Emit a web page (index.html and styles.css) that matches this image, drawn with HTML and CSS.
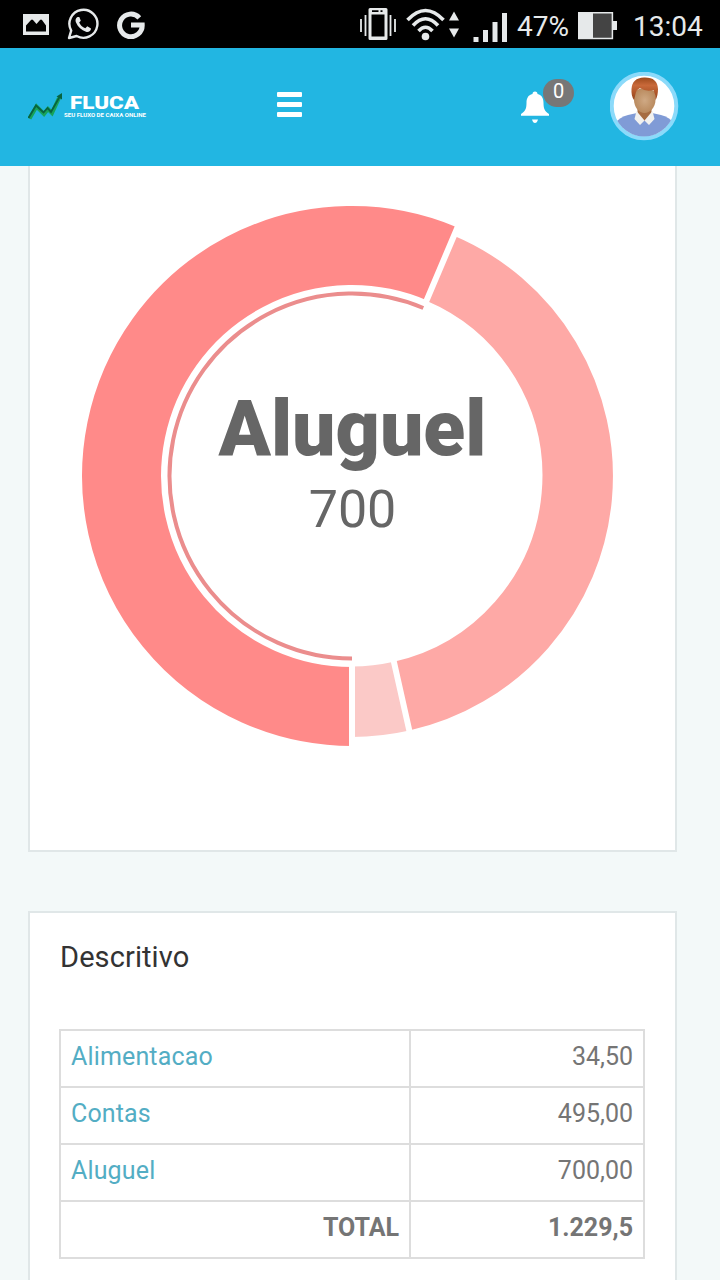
FILE: index.html
```
<!DOCTYPE html>
<html lang="pt-br">

<head>
    <meta charset="utf-8" />
    <meta name="viewport" content="width=device-width, initial-scale=1.0" />
    <title>Fluca - Seu fluxo de caixa online</title>
    <link rel="stylesheet" href="styles.css">
</head>

<body>
    <div class="status-bar">
        <div class="status-left">
            <svg width="26" height="21" viewBox="0 0 26 21">
                <path fill="#e6e9ea" fill-rule="evenodd" d="M0 0H26V21H0ZM3 17.500V11.500L8 6Q9 5 10 6L13.500 10L17 6Q18 5 19 6L23 11.500V17.500Z" />
            </svg>
            <svg class="whatsapp" width="32" height="32" viewBox="0 0 32 32">
                <path fill="none" stroke="#e6e9ea" stroke-width="2.400" stroke-linejoin="round" d="M2 30L4.200 22.600A14 14 0 1 1 9.600 28Z" />
                <path fill="#e6e9ea" d="M10.500 9C8.500 10 8 12.500 9 14.500C11 19 14.500 22.300 19 23.800C21.500 24.500 24 23 24 20.500L20.300 18.300L18.300 20.300C15.500 19.200 13.200 17 12.200 14.500L13.800 12.800L12.300 9Z" />
            </svg>
            <svg class="google" width="28" height="28" viewBox="0 0 28 28">
                <path fill="none" stroke="#e6e9ea" stroke-width="5" d="M22.300 6.800A11.300 11.300 0 1 0 25.200 13.900H14" />
            </svg>
        </div>
        <div class="status-right">
            <svg width="38" height="34" viewBox="0 0 38 34">
                <path fill="none" stroke="#e6e9ea" stroke-width="1.800" d="M2 12V25M6.500 8V29M31.500 8V29M36 12V25" />
                <path fill="#e6e9ea" fill-rule="evenodd" d="M11 1H27Q28.500 1 28.500 2.500V31.500Q28.500 33 27 33H11Q9.500 33 9.500 31.500V2.500Q9.500 1 11 1ZM12.500 7.500V29.500H25.500V7.500ZM13 3.200V5H19.500V3.200ZM21.500 3.200V5H23.500V3.200Z" />
            </svg>
            <svg class="wifi" width="54" height="34" viewBox="0 0 54 34">
                <path fill="none" stroke="#e6e9ea" stroke-width="3.600" d="M1.500 13Q19.500 -6 37.500 13M7 18.500Q19.500 5 32 18.500M12.500 24Q19.500 16.500 26.500 24" />
                <circle cx="19.500" cy="29.500" r="3.800" fill="#e6e9ea" />
                <path fill="#e6e9ea" d="M43 13.500L48 4.500L53 13.500ZM43 21.500H53L48 30.500Z" />
            </svg>
            <svg class="signal" width="34" height="29" viewBox="0 0 34 29">
                <path fill="none" stroke="#e6e9ea" stroke-width="5" d="M3 29V24M12.500 29V17M22 29V9M31.500 29V0" />
            </svg>
            <span class="percent">47%</span>
            <svg class="battery" width="39" height="28" viewBox="0 0 39 28">
                <path fill="#444" d="M1 1H34V26H1Z" />
                <path fill="#e6e9ea" d="M0 0H15V27H0ZM35 9H39V18H35Z" />
                <path fill="none" stroke="#e6e9ea" stroke-width="1.500" d="M.8.800H34.400V26.400H.8Z" />
            </svg>
            <span class="clock">13:04</span>
        </div>
    </div>

    <header class="navbar">
        <a class="logo" href="#">
            <svg width="35" height="27" viewBox="0 0 35 27">
                <path fill="none" stroke="#17a35a" stroke-width="4" d="M1.500 25.500L8.500 13.500L16 21L20 16L24 20L31 5" />
                <path fill="none" stroke="#08633f" stroke-width="1.800" d="M.5 25L8 12.500L15.500 19.500L19.500 15L23 19L31.500 4" />
                <path fill="#08633f" d="M28.500 3.500L34 0L34 6.500Z" />
            </svg>
            <svg width="84" height="28" viewBox="0 0 84 28">
                <text class="logo-name" x="7" y="15.500" textLength="69" lengthAdjust="spacingAndGlyphs">FLUCA</text>
                <text class="logo-slogan" x="1" y="23.500" textLength="82" lengthAdjust="spacingAndGlyphs">SEU FLUXO DE CAIXA ONLINE</text>
            </svg>
        </a>
        <button class="menu-toggle">
            <span></span>
            <span></span>
            <span></span>
        </button>
        <div class="notifications">
            <svg width="28" height="33" viewBox="0 0 28 33">
                <path fill="#fff" d="M11.500 3Q11.500 .5 14 .5T16.500 3C21 4 22.500 7.500 22.500 12C22.500 18 24 20.500 28 23V24.800H0V23C4 20.500 5.500 18 5.500 12C5.500 7.500 7 4 11.500 3ZM11 28.500H17Q16 32 14 32T11 28.500Z" />
            </svg>
            <span class="badge">0</span>
        </div>
        <svg class="avatar" width="70" height="70" viewBox="0 0 70 70">
            <defs>
                <clipPath id="avatar-clip">
                    <circle cx="34" cy="34" r="30.500" />
                </clipPath>
                <radialGradient id="skin">
                    <stop offset="0" stop-color="#cfa984" />
                    <stop offset="1" stop-color="#b98a5e" />
                </radialGradient>
                <linearGradient id="hair" x2="0" y2="1">
                    <stop offset="0" stop-color="#9c4a1c" />
                    <stop offset=".35" stop-color="#c9693a" />
                    <stop offset="1" stop-color="#94441a" />
                </linearGradient>
            </defs>
            <circle cx="34" cy="34" r="32.300" fill="#fff" stroke="#8bdafa" stroke-width="4" />
            <g clip-path="url(#avatar-clip)">
                <path fill="#809bd6" d="M4 66V52Q10 45 18 43L27 41H42L51 43Q59 45 65 52V66Z" />
                <path fill="#a66d42" d="M27.500 34H41.500V43L34.500 49L27.500 43Z" />
                <path fill="#f1f1ef" d="M26.500 39L34.500 48.500L30 53L24.500 47ZM42.500 39L34.500 48.500L39 53L44.500 47Z" />
                <path fill="url(#skin)" d="M24 20Q34 12 45.500 20V28C45.500 35 40 41 34.500 41S24 35 24 28Z" />
                <path fill="url(#hair)" d="M24 28Q21 24 21.500 17Q22 6 34 5.500Q47.500 5 48 17Q48 24 45.500 28Q45.500 22 43.500 18Q36 20 30 16Q26 18 25.500 22Z" />
            </g>
        </svg>
    </header>

    <main class="content">
        <section class="panel chart-panel">
            <svg class="donut" width="560" height="560" viewBox="-280 -280 560 560">
                <!-- slices -->
                <path class="slice aluguel" d="M0 230.500A230.500 230.500 0 1 1 90.060 -212.200" />
                <path class="slice contas" d="M88.200 -207.800A225.750 225.750 0 0 1 49.600 220.200" />
                <path class="slice alimentacao" d="M49.600 220.200A225.750 225.750 0 0 1 0 225.750" />
                <path class="gaps" d="M0 186V276M72.700 -171.200L107.800 -254M40.900 181.400L60.200 267.300" />
                <!-- selected slice marker -->
                <path class="marker" d="M0 182.500A182.500 182.500 0 1 1 71.300 -168" />
                <text class="donut-label" x="0.500" y="-21.500" textLength="268" lengthAdjust="spacingAndGlyphs">Aluguel</text>
                <text class="donut-value" x="0.500" y="50.500">700</text>
            </svg>
        </section>

        <section class="panel table-panel">
            <h2>Descritivo</h2>
            <table>
                <tr>
                    <td><a href="#">Alimentacao</a></td>
                    <td class="value">34,50</td>
                </tr>
                <tr>
                    <td><a href="#">Contas</a></td>
                    <td class="value">495,00</td>
                </tr>
                <tr>
                    <td><a href="#">Aluguel</a></td>
                    <td class="value">700,00</td>
                </tr>
                <tr class="total">
                    <td class="value">TOTAL</td>
                    <td class="value">1.229,5</td>
                </tr>
            </table>
        </section>
    </main>
</body>

</html>
```
FILE: styles.css
```
* {
    box-sizing: border-box;
}

body {
    margin: 0;
    height: 1280px;
    overflow: hidden;
    font-family: Roboto, sans-serif;
    color: #757575;
    background: #f3f9f9;
}

svg {
    display: block;
    flex: none;
}

.status-bar {
    display: flex;
    justify-content: space-between;
    height: 48px;
    padding: 0 16px 0 23px;
    background: #000;
    color: #e6e9ea;
}

.status-left,
.status-right {
    display: flex;
    align-items: center;
}

.whatsapp {
    margin-left: 18px;
}

.google {
    margin: 2px 0 0 18px;
}

.wifi {
    margin-left: 9px;
}

.signal {
    margin: 6px 0 0 13px;
}

.percent {
    width: 54px;
    margin: 4px 0 0 10px;
    font-size: 28px;
}

.battery {
    margin: 3px 0 0 7px;
}

.clock {
    width: 71px;
    margin: 4px 0 0 16px;
    font-size: 28px;
}

.navbar {
    display: flex;
    align-items: flex-start;
    height: 118px;
    padding: 24px 40px 0 28px;
    background: #22b6e2;
}

.logo {
    display: flex;
    margin-top: 21px;
}

.logo-name {
    font: 900 18px Roboto, sans-serif;
    fill: #fff;
}

.logo-slogan {
    font: 700 6px Roboto, sans-serif;
    fill: #fff;
}

.menu-toggle {
    display: flex;
    flex-direction: column;
    gap: 5px;
    margin: 20px 0 0 130px;
    padding: 0;
    border: 0;
    background: none;
}

.menu-toggle span {
    width: 25px;
    height: 5px;
    border-radius: 1px;
    background: #fff;
}

.notifications {
    position: relative;
    margin: 19px 0 0 auto;
}

.badge {
    position: absolute;
    left: 22px;
    top: -12px;
    width: 31px;
    height: 28px;
    border-radius: 14px;
    background: #777;
    color: #fff;
    font-size: 20px;
    line-height: 24px;
    text-align: center;
}

.avatar {
    margin: -0.5px 0 0 61px;
}

.content {
    padding: 0 43px 0 28px;
}

.panel {
    border: 2px solid #e0e7e8;
    background: #fff;
}

.chart-panel {
    height: 686px;
    padding-top: 30px;
    border-top: 0;
}

.donut {
    margin-left: 42px;
    overflow: visible;
}

.slice {
    fill: none;
    stroke-width: 70.5;
}

.aluguel {
    stroke: #ff8a89;
    stroke-width: 79;
}

.contas {
    stroke: #fea9a6;
}

.alimentacao {
    stroke: #fbc9c7;
}

.gaps {
    fill: none;
    stroke: #fff;
    stroke-width: 6;
}

.marker {
    fill: none;
    stroke: #eb8d8d;
    stroke-width: 4;
}

.donut-label,
.donut-value {
    fill: #666;
    text-anchor: middle;
}

.donut-label {
    font-size: 77px;
    font-weight: 900;
}

.donut-value {
    font-size: 52px;
}

.table-panel {
    height: 420px;
    margin-top: 59px;
    padding: 27px 29px 0;
}

h2 {
    margin: 0 0 55px 1px;
    font-size: 29px;
    font-weight: 400;
    line-height: 34px;
    letter-spacing: 0.1px;
    color: #333;
}

table {
    width: 586px;
    table-layout: fixed;
    border-collapse: collapse;
    font-size: 25px;
    line-height: 30px;
}

td {
    height: 57px;
    padding: 0 10px 4px;
    border: 2px solid #ddd;
}

td:first-child {
    width: 350px;
}

td a {
    color: #53adc4;
    text-decoration: none;
    letter-spacing: 0.15px;
}

.value {
    text-align: right;
}

.total {
    font-weight: 700;
}
```
